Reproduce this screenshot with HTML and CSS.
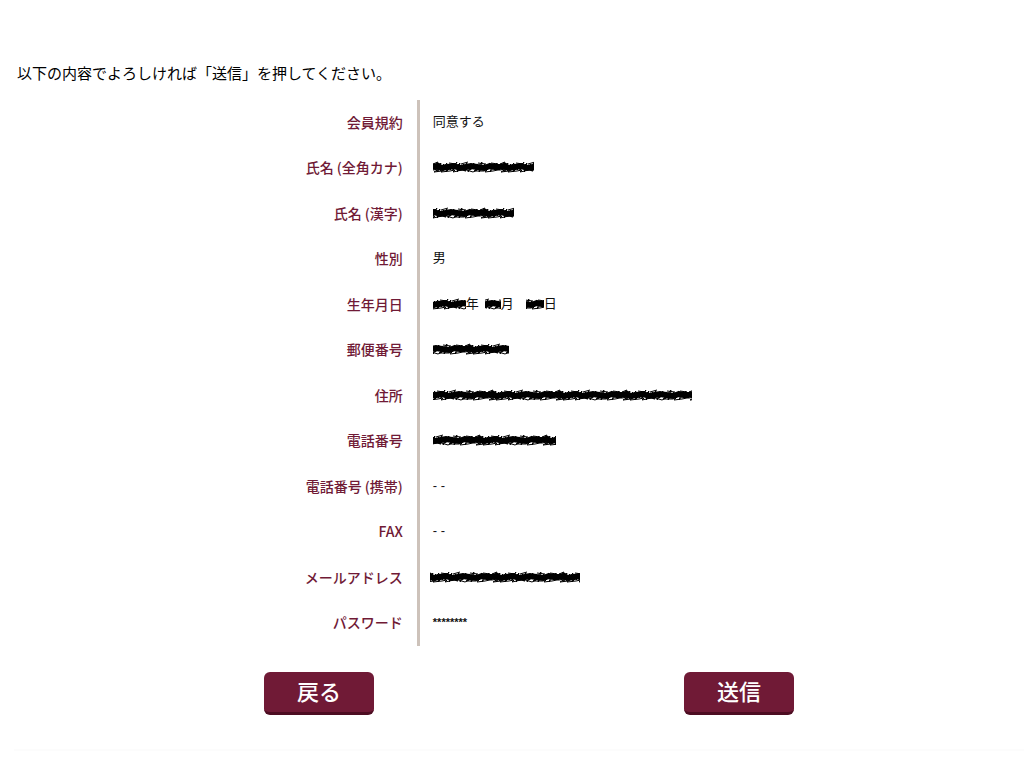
FILE: index.html
```
<!DOCTYPE html>
<html lang="ja">
<head>
<meta charset="utf-8">
<meta name="viewport" content="width=device-width, initial-scale=1">
<title>会員登録</title>
<link rel="stylesheet" href="styles.css">
</head>
<body>
<svg class="defs" width="0" height="0" aria-hidden="true">
  <defs>
    <pattern id="ink" width="67" height="12" patternUnits="userSpaceOnUse">
      <g fill="none" stroke="#000">
        <path stroke-width="6" d="M-2 6L4 5L9 7L15 6L21 5L27 7L33 6L38 5L44 6L51 7L57 5L62 6L69 6"/>
        <path stroke-width="1" d="M0 3L5 1L2 9L8 2L4 11L11 3L7 10L14 2L10 9L16 3L13 11L20 4L17 9L24 1L19 10L27 2L24 11L31 3L26 9L34 2L31 10L38 4L35 11L41 2L37 9L45 3L42 10L49 1L46 11L52 3L49 9L57 2L53 10L60 3L57 11L64 2L61 9L67 3"/>
        <path stroke-width="1" d="M0 9L6 8L1 11L9 10L12 8L8 11L17 10L22 9L20 11L29 9L33 10L30 8L40 11L44 9L41 10L51 10L54 8L52 11L60 10L65 9L67 9M3 2L8 3M16 2L23 3M28 3L35 1M45 2L53 3M58 2L65 3"/>
      </g>
    </pattern>
  </defs>
</svg>
<main class="confirm">
  <p class="lead">以下の内容でよろしければ「送信」を押してください。</p>
  <form>
    <table class="details">
      <tbody>
        <tr><th scope="row">会員規約</th><td>同意する</td></tr>
        <tr><th scope="row">氏名 (全角カナ)</th><td><svg class="ink" width="101" height="12" role="img" aria-label="非表示"><rect width="101" height="12" fill="url(#ink)"/></svg></td></tr>
        <tr><th scope="row">氏名 (漢字)</th><td><svg class="ink" width="81" height="12" viewBox="20 0 81 12" role="img" aria-label="非表示"><rect x="20" width="81" height="12" fill="url(#ink)"/></svg></td></tr>
        <tr><th scope="row">性別</th><td>男</td></tr>
        <tr><th scope="row">生年月日</th><td><span class="date"><span class="part"><svg class="ink" width="33" height="12" viewBox="9 0 33 12" role="img" aria-label="非表示"><rect x="9" width="33" height="12" fill="url(#ink)"/></svg>年</span><span class="part"><svg class="ink" width="16" height="12" viewBox="31 0 16 12" role="img" aria-label="非表示"><rect x="31" width="16" height="12" fill="url(#ink)"/></svg>月</span><span class="part day"><svg class="ink" width="18" height="12" viewBox="46 0 18 12" role="img" aria-label="非表示"><rect x="46" width="18" height="12" fill="url(#ink)"/></svg>日</span></span></td></tr>
        <tr><th scope="row">郵便番号</th><td><svg class="ink" width="76" height="12" viewBox="35 0 76 12" role="img" aria-label="非表示"><rect x="35" width="76" height="12" fill="url(#ink)"/></svg></td></tr>
        <tr><th scope="row">住所</th><td><svg class="ink" width="259" height="12" viewBox="12 0 259 12" role="img" aria-label="非表示"><rect x="12" width="259" height="12" fill="url(#ink)"/></svg></td></tr>
        <tr><th scope="row">電話番号</th><td><svg class="ink" width="123" height="12" viewBox="25 0 123 12" role="img" aria-label="非表示"><rect x="25" width="123" height="12" fill="url(#ink)"/></svg></td></tr>
        <tr><th scope="row">電話番号 (携帯)</th><td>- -</td></tr>
        <tr><th scope="row">FAX</th><td>- -</td></tr>
        <tr><th scope="row">メールアドレス</th><td class="mail"><svg class="ink" width="150" height="12" viewBox="5 0 150 12" role="img" aria-label="非表示"><rect x="5" width="150" height="12" fill="url(#ink)"/></svg></td></tr>
        <tr><th scope="row">パスワード</th><td class="password">********</td></tr>
      </tbody>
    </table>
    <div class="actions">
      <button type="button">戻る</button>
      <button type="submit">送信</button>
    </div>
  </form>
</main>
<hr class="rule">
</body>
</html>
```
FILE: styles.css
```
body {
  margin: 0;
  background: #fff;
  color: #111;
  font-family: "Noto Sans CJK JP", sans-serif;
  font-size: 13px;
  line-height: 20px;
}

.defs {
  position: absolute;
}

.confirm {
  padding-top: 63px;
}

.lead {
  margin: 0 0 17px 17px;
  color: #000;
  font-size: 15px;
}

.details {
  width: 100%;
  border-collapse: separate;
  border-spacing: 0;
  table-layout: fixed;
}

.details th,
.details td {
  box-sizing: border-box;
  height: 46px;
  padding: 0 14px 3px;
  vertical-align: middle;
}

.details tr:nth-child(even) th,
.details tr:nth-child(even) td {
  height: 45px;
}

.details th {
  width: 41%;
  border-right: 3px solid #cdc2ba;
  color: #701a36;
  font-size: 14px;
  font-weight: 500;
  text-align: right;
}

.details td {
  padding-left: 13px;
  font-family: "Liberation Sans", "Noto Sans CJK JP", sans-serif;
}

.details td.mail {
  padding-left: 10px;
}

.details td.password {
  font-size: 11px;
  font-weight: 700;
}

.ink {
  display: block;
}

.date {
  display: flex;
  align-items: center;
  gap: 6px;
}

.part {
  display: flex;
  align-items: center;
}

.day {
  padding-left: 6px;
}

.actions {
  display: flex;
  justify-content: center;
  gap: 310px;
  padding: 26px 0 0 34px;
}

.actions button {
  width: 110px;
  height: 43px;
  padding: 0 0 4px;
  border: 0;
  border-bottom: 3px solid #4d0d22;
  border-radius: 6px;
  background: #701a36;
  color: #fff;
  font-family: inherit;
  font-size: 22px;
  font-weight: 500;
  line-height: 36px;
}

.rule {
  margin: 34px 0 0 14px;
  border: 0;
  border-top: 2px solid #fcfcfc;
}
```
